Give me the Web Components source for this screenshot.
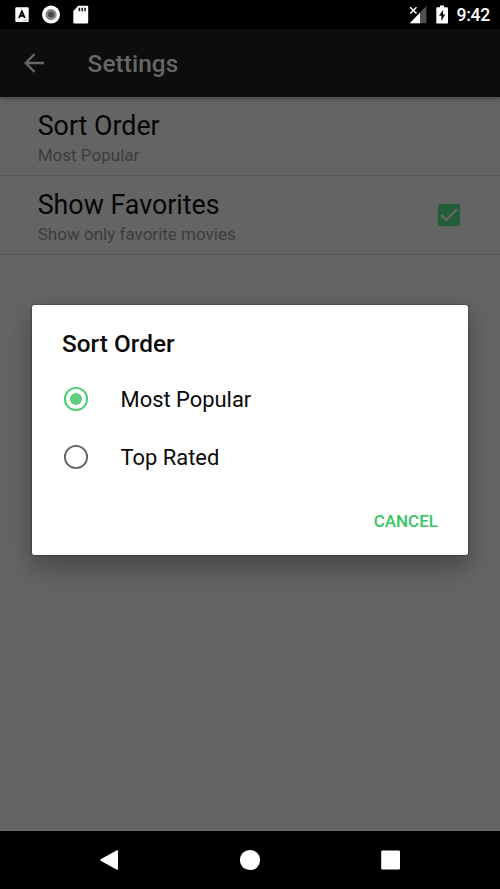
<!DOCTYPE html>
<html lang="en">
<head>
<meta charset="utf-8">
<title>Settings</title>
<style>
html, body { margin: 0; height: 100%; overflow: hidden; background: #000; }
body { font-family: Roboto, "Liberation Sans", sans-serif; }
</style>
</head>
<body>
<settings-screen></settings-screen>
<script>
function define(name, html) {
  const t = document.createElement('template');
  t.innerHTML = html;
  customElements.define(name, class extends HTMLElement {
    constructor() {
      super();
      this.attachShadow({ mode: 'open' }).append(t.content.cloneNode(true));
    }
  });
}

define('status-bar', `
<style>
:host { display: flex; height: 29px; box-sizing: border-box; background: #000; color: #fff; justify-content: space-between; }
svg { display: block; }
.right { display: flex; }
.time { width: 43.5px; font-size: 17.6px; line-height: 31px; font-weight: 500; white-space: nowrap; letter-spacing: -.3px; }
</style>
<svg width="110" height="29" viewBox="0 0 110 29">
  <rect x="15.3" y="7.3" width="13.4" height="14.6" rx="1" fill="#fff"/>
  <path d="M19 18 21.9 11.4 24.8 18M20.2 15.8h3.4" fill="none" stroke="#000" stroke-width="1.8"/>
  <path d="M22.5 20.2h5" stroke="#aaa" stroke-width="1"/>
  <circle cx="51" cy="14.6" r="9" fill="#fff"/>
  <circle cx="51" cy="14.6" r="5.6" fill="#858585"/>
  <circle cx="51" cy="14.6" r="3" fill="#484848"/>
  <path d="M78.2 5.8H87a1.2 1.2 0 0 1 1.2 1.2v15.2a1.3 1.3 0 0 1-1.3 1.3H74.6a1.3 1.3 0 0 1-1.3-1.3V11z" fill="#fff"/>
  <path d="M79.4 7.8v3.4M82.2 7.8v3.4M85 7.8v3.4" stroke="#111" stroke-width="1.5"/>
</svg>
<div class="right">
  <svg width="47" height="29" viewBox="410 0 47 29">
    <path d="M426.4 6v17.3H409.5z" fill="#505050"/>
    <path d="M420 12.7v10.6h-10.4z" fill="#fff"/>
    <path d="M408 5h10v9h-4l-4 3z" fill="#000"/>
    <path d="M410.3 7.2l6.2 6.2M416.5 7.2l-6.2 6.2" stroke="#fff" stroke-width="1.4"/>
    <path d="M440 5.4h4v1.8h2.8a1.2 1.2 0 0 1 1.2 1.2v14a1.2 1.2 0 0 1-1.2 1.2h-9.3a1.2 1.2 0 0 1-1.2-1.2v-14a1.2 1.2 0 0 1 1.2-1.2h2.5z" fill="#fff"/>
    <path d="M443.2 9.7l-4.2 6h2.3v5.2l4-6.5H443z" fill="#111"/>
  </svg>
  <div class="time">9:42</div>
</div>`);

define('app-bar', `
<style>
:host { display: flex; align-items: center; height: 68px; background: #0d0d0d; color: #676767; box-shadow: 0 1px 5px rgba(0,0,0,.42); position: relative; }
svg { display: block; margin: 0 41.6px 0 24px; }
h1 { margin: 0; font-size: 24.3px; font-weight: 500; line-height: 28px; padding-top: 1px; letter-spacing: .1px; }
</style>
<svg width="22" height="22" viewBox="0 0 22 22"><path d="M10.6 2 1.7 11l8.9 9M2 11H20" fill="none" stroke="currentColor" stroke-width="2.3"/></svg>
<h1><slot></slot></h1>`);

define('preference-row', `
<style>
:host { display: flex; align-items: center; justify-content: space-between; height: 79px; box-sizing: border-box; border-bottom: 1px solid #555; padding: 0 39px 0 37.7px; }
.title { color: #060606; font-size: 26.8px; line-height: 32px; padding-top: 3px; }
.summary { color: #3d3d3d; font-size: 17.05px; line-height: 22px; padding-top: 2px; }
</style>
<div><div class="title"><slot></slot></div><div class="summary"><slot name="summary"></slot></div></div>
<slot name="widget"></slot>`);

define('check-box', `
<style>:host { display: block; } svg { display: block; }</style>
<svg width="24" height="24" viewBox="437 203 24 24">
  <rect x="438" y="204" width="22" height="22.2" rx="2.3" fill="#245e38"/>
  <path d="M441.2 214.9l4.9 4.9 10.8-10.4" fill="none" stroke="#676767" stroke-width="2.4"/>
</svg>`);

customElements.define('radio-option', class extends HTMLElement {
  constructor() {
    super();
    const on = this.hasAttribute('checked');
    this.attachShadow({ mode: 'open' }).innerHTML = `
<style>
:host { display: flex; align-items: center; height: 58.3px; }
svg { display: block; margin-right: 31.2px; }
span { color: #0a0a0a; font-size: 21.9px; line-height: 28px; padding-top: 2px; }
</style>
<svg width="26" height="26" viewBox="0 0 26 26">
  <circle cx="13" cy="13" r="11.1" fill="none" stroke="${on ? '#43cf70' : '#656565'}" stroke-width="1.9"/>
  ${on ? '<circle cx="13" cy="13" r="6.1" fill="#60cd80"/>' : ''}
</svg><span><slot></slot></span>`;
  }
});

define('choice-dialog', `
<style>
:host { display: flex; flex-direction: column; position: absolute; left: 32px; top: 305px; width: 436px; height: 250px; box-sizing: border-box; padding: 24px 30px 20px; background: #fff; border-radius: 2.5px; box-shadow: 0 0 2px rgba(0,0,0,.65), 0 16px 24px rgba(0,0,0,.2), 0 4px 22px rgba(0,0,0,.12); }
h2 { margin: 0; font-size: 24.3px; line-height: 29px; font-weight: 500; color: #0a0a0a; letter-spacing: .05px; }
.options { padding: 11.6px 0 0 1.4px; }
.actions { margin-top: auto; display: flex; justify-content: flex-end; color: #38c568; font-size: 17px; line-height: 28px; font-weight: 500; }
</style>
<h2><slot name="title"></slot></h2>
<div class="options"><slot></slot></div>
<div class="actions"><slot name="action"></slot></div>`);

define('nav-bar', `
<style>:host { display: flex; height: 58px; background: #000; } svg { display: block; }</style>
<svg width="500" height="58" viewBox="0 831 500 58" fill="#fff">
  <path d="M117.3 851v18L101 860z" stroke="#fff" stroke-width="1.5" stroke-linejoin="round"/>
  <circle cx="250" cy="860" r="10.1"/>
  <rect x="381.2" y="850.6" width="18.8" height="18.8" rx="1.2"/>
</svg>`);

define('settings-screen', `
<style>
:host { display: flex; flex-direction: column; position: relative; width: 500px; height: 889px; background: #000; }
main { flex: 1; background: #646464; }
</style>
<status-bar></status-bar>
<app-bar>Settings</app-bar>
<main>
  <preference-row>Sort Order<span slot="summary">Most Popular</span></preference-row>
  <preference-row>Show Favorites<span slot="summary">Show only favorite movies</span><check-box slot="widget"></check-box></preference-row>
</main>
<nav-bar></nav-bar>
<choice-dialog>
  <span slot="title">Sort Order</span>
  <radio-option checked>Most Popular</radio-option>
  <radio-option>Top Rated</radio-option>
  <span slot="action">CANCEL</span>
</choice-dialog>`);
</script>
</body>
</html>
